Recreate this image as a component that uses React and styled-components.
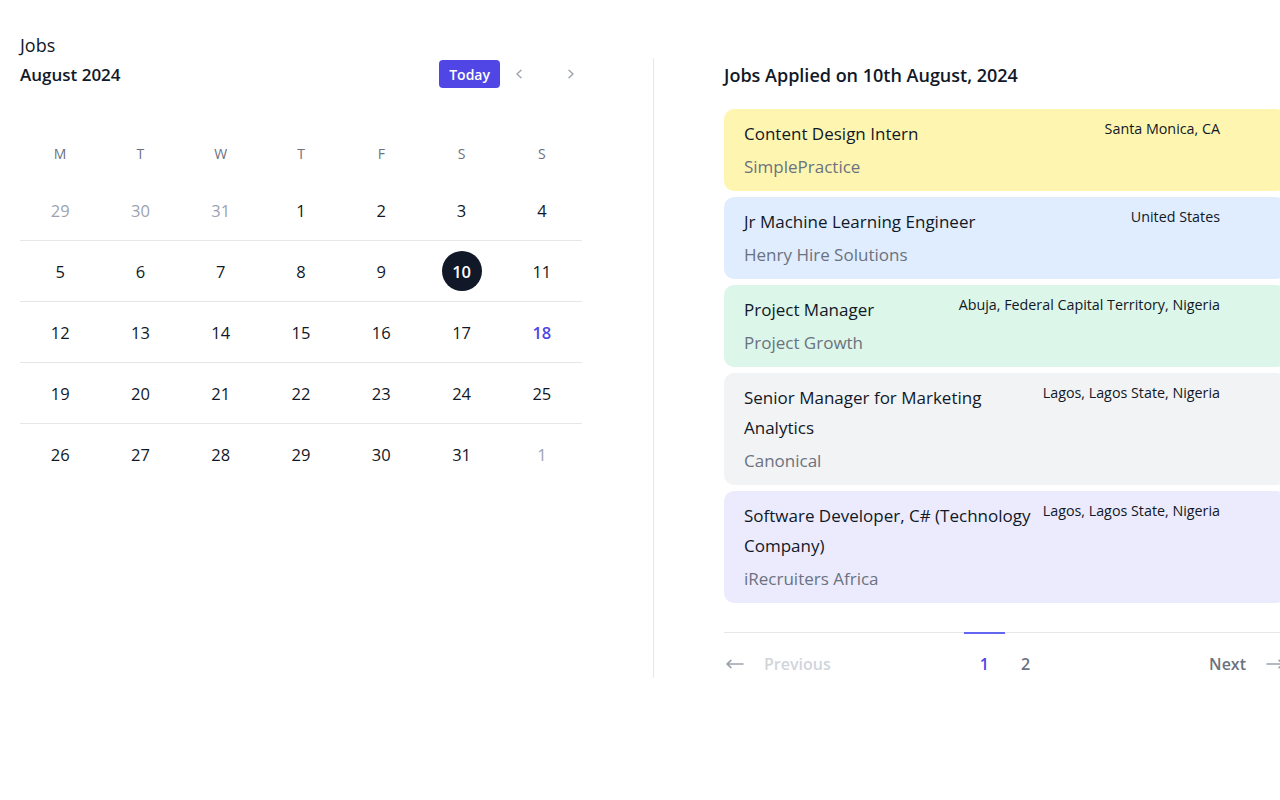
import React from 'react';
import styled, { createGlobalStyle } from 'styled-components';

const GlobalStyle = createGlobalStyle`
  html, body {
    margin: 0;
    padding: 0;
    background: #ffffff;
    overflow: hidden;
  }
  body {
    font-family: "Open Sans", "Noto Sans", sans-serif;
    color: #111827;
  }
  * { box-sizing: border-box; }
`;

const Page = styled.div`
  padding: 33px 0 0 20px;
  width: 1300px;
`;

const PageTitle = styled.h1`
  margin: 0 0 1px;
  font-size: 18px;
  font-weight: 400;
  line-height: 24px;
  color: #111827;
`;

const Columns = styled.div`
  display: grid;
  grid-template-columns: 633px 633px;
`;

const CalendarColumn = styled.section`
  padding-right: 71px;
`;

const JobsColumn = styled.section`
  border-left: 1px solid #e5e7eb;
  padding-left: 70px;
`;

const CalendarHeader = styled.div`
  display: flex;
  align-items: center;
  height: 32px;
`;

const MonthTitle = styled.h2`
  flex: 1;
  margin: 0;
  font-size: 17px;
  font-weight: 600;
  color: #111827;
`;

const TodayButton = styled.button`
  height: 28px;
  padding: 0 10px;
  border: none;
  border-radius: 4px;
  background: #4f46e5;
  color: #ffffff;
  font-family: inherit;
  font-size: 14px;
  font-weight: 600;
  cursor: pointer;
`;

const NavButton = styled.button`
  display: flex;
  align-items: center;
  justify-content: center;
  width: 22px;
  height: 28px;
  padding: 0;
  margin-left: ${p => p.$gap}px;
  border: none;
  background: none;
  color: #9ca3af;
  cursor: pointer;
`;

const WeekDays = styled.div`
  display: grid;
  grid-template-columns: repeat(7, 1fr);
  margin-top: 52px;
  text-align: center;
  font-size: 14px;
  line-height: 24px;
  color: #6b7280;
`;

const DaysGrid = styled.div`
  display: grid;
  grid-template-columns: repeat(7, 1fr);
  margin-top: 14px;
`;

const DayCell = styled.div`
  display: flex;
  justify-content: center;
  padding: 10px 0;
  border-top: ${p => (p.$first ? 'none' : '1px solid #e5e7eb')};
`;

const DayNumber = styled.span`
  display: flex;
  align-items: center;
  justify-content: center;
  width: 40px;
  height: 40px;
  padding-top: 1px;
  border-radius: 50%;
  font-size: 16.5px;
  font-weight: ${p => (p.$selected || p.$today ? 600 : 400)};
  background: ${p => (p.$selected ? '#111827' : 'transparent')};
  color: ${p =>
    p.$selected ? '#ffffff' : p.$today ? '#4f46e5' : p.$muted ? '#9ca3af' : '#111827'};
`;

const SectionTitle = styled.h2`
  margin: 0;
  padding-top: 1px;
  font-size: 18px;
  font-weight: 600;
  line-height: 32px;
  color: #111827;
`;

const CardList = styled.div`
  display: flex;
  flex-direction: column;
  gap: 6px;
  margin-top: 18px;
`;

const JobCard = styled.div`
  display: flex;
  justify-content: space-between;
  gap: 8px;
  padding: 10px 66px 9px 20px;
  border-radius: 10px;
  background: ${p => p.$bg};
`;

const JobInfo = styled.div`
  display: flex;
  flex-direction: column;
`;

const JobTitle = styled.div`
  font-size: 17px;
  line-height: 30px;
  color: #111827;
`;

const Company = styled.div`
  margin-top: 3px;
  font-size: 17px;
  line-height: 30px;
  color: #6b7280;
`;

const Location = styled.div`
  flex-shrink: 0;
  font-size: 14.3px;
  line-height: 20px;
  color: #111827;
`;

const Pagination = styled.nav`
  display: flex;
  align-items: flex-start;
  margin-top: 29px;
  border-top: 1px solid #e5e7eb;
`;

const PageSide = styled.div`
  flex: 1;
  display: flex;
  justify-content: ${p => (p.$end ? 'flex-end' : 'flex-start')};
`;

const PageLink = styled.a`
  display: inline-flex;
  align-items: center;
  gap: ${p => (p.$arrow ? '18px' : '0')};
  margin-top: -1px;
  padding: 16px ${p => (p.$arrow ? '0' : '16px')} 0;
  border-top: 2px solid ${p => (p.$active ? '#6366f1' : 'transparent')};
  font-size: 16px;
  font-weight: 600;
  line-height: 28px;
  color: ${p => (p.$active ? '#4f46e5' : p.$disabled ? '#d1d5db' : '#6b7280')};
  text-decoration: none;
  cursor: pointer;
  svg { color: #9ca3af; }
`;

const weekDays = ['M', 'T', 'W', 'T', 'F', 'S', 'S'];

const days = [
  ...[29, 30, 31].map(d => ({ d, muted: true })),
  ...Array.from({ length: 31 }, (_, i) => ({ d: i + 1 })),
  { d: 1, muted: true },
].map(day => ({
  ...day,
  selected: !day.muted && day.d === 10,
  today: !day.muted && day.d === 18,
}));

const jobs = [
  { title: 'Content Design Intern', company: 'SimplePractice', location: 'Santa Monica, CA', bg: '#fef6b0' },
  { title: 'Jr Machine Learning Engineer', company: 'Henry Hire Solutions', location: 'United States', bg: '#e0edfe' },
  { title: 'Project Manager', company: 'Project Growth', location: 'Abuja, Federal Capital Territory, Nigeria', bg: '#dcf6e9' },
  { title: 'Senior Manager for Marketing Analytics', company: 'Canonical', location: 'Lagos, Lagos State, Nigeria', bg: '#f2f3f5' },
  { title: 'Software Developer, C# (Technology Company)', company: 'iRecruiters Africa', location: 'Lagos, Lagos State, Nigeria', bg: '#ebebfd' },
];

const Chevron = ({ dir }) => (
  <svg width="18" height="18" viewBox="0 0 20 20" fill="currentColor">
    {dir === 'left' ? (
      <path fillRule="evenodd" d="M12.79 5.23a.75.75 0 01-.02 1.06L8.832 10l3.938 3.71a.75.75 0 11-1.04 1.08l-4.5-4.25a.75.75 0 010-1.08l4.5-4.25a.75.75 0 011.06.02z" clipRule="evenodd" />
    ) : (
      <path fillRule="evenodd" d="M7.21 14.77a.75.75 0 01.02-1.06L11.168 10 7.23 6.29a.75.75 0 111.04-1.08l4.5 4.25a.75.75 0 010 1.08l-4.5 4.25a.75.75 0 01-1.06-.02z" clipRule="evenodd" />
    )}
  </svg>
);

const LongArrow = ({ dir }) => (
  <svg width="22" height="22" viewBox="0 0 20 20" fill="currentColor">
    {dir === 'left' ? (
      <path fillRule="evenodd" d="M18 10a.75.75 0 01-.75.75H4.66l2.1 1.95a.75.75 0 11-1.02 1.1l-3.5-3.25a.75.75 0 010-1.1l3.5-3.25a.75.75 0 111.02 1.1l-2.1 1.95h12.59A.75.75 0 0118 10z" clipRule="evenodd" />
    ) : (
      <path fillRule="evenodd" d="M2 10a.75.75 0 01.75-.75h12.59l-2.1-1.95a.75.75 0 111.02-1.1l3.5 3.25a.75.75 0 010 1.1l-3.5 3.25a.75.75 0 11-1.02-1.1l2.1-1.95H2.75A.75.75 0 012 10z" clipRule="evenodd" />
    )}
  </svg>
);

export default function App() {
  return (
    <Page>
      <GlobalStyle />
      <PageTitle>Jobs</PageTitle>
      <Columns>
        <CalendarColumn>
          <CalendarHeader>
            <MonthTitle>August 2024</MonthTitle>
            <TodayButton>Today</TodayButton>
            <NavButton $gap={8}><Chevron dir="left" /></NavButton>
            <NavButton $gap={30}><Chevron dir="right" /></NavButton>
          </CalendarHeader>
          <WeekDays>
            {weekDays.map((w, i) => <div key={i}>{w}</div>)}
          </WeekDays>
          <DaysGrid>
            {days.map((day, i) => (
              <DayCell key={i} $first={i < 7}>
                <DayNumber $muted={day.muted} $selected={day.selected} $today={day.today}>
                  {day.d}
                </DayNumber>
              </DayCell>
            ))}
          </DaysGrid>
        </CalendarColumn>

        <JobsColumn>
          <SectionTitle>Jobs Applied on 10th August, 2024</SectionTitle>
          <CardList>
            {jobs.map(job => (
              <JobCard key={job.title} $bg={job.bg}>
                <JobInfo>
                  <JobTitle>{job.title}</JobTitle>
                  <Company>{job.company}</Company>
                </JobInfo>
                <Location>{job.location}</Location>
              </JobCard>
            ))}
          </CardList>
          <Pagination>
            <PageSide>
              <PageLink $arrow $disabled><LongArrow dir="left" />Previous</PageLink>
            </PageSide>
            <div>
              <PageLink $active>1</PageLink>
              <PageLink>2</PageLink>
            </div>
            <PageSide $end>
              <PageLink $arrow>Next<LongArrow dir="right" /></PageLink>
            </PageSide>
          </Pagination>
        </JobsColumn>
      </Columns>
    </Page>
  );
}
